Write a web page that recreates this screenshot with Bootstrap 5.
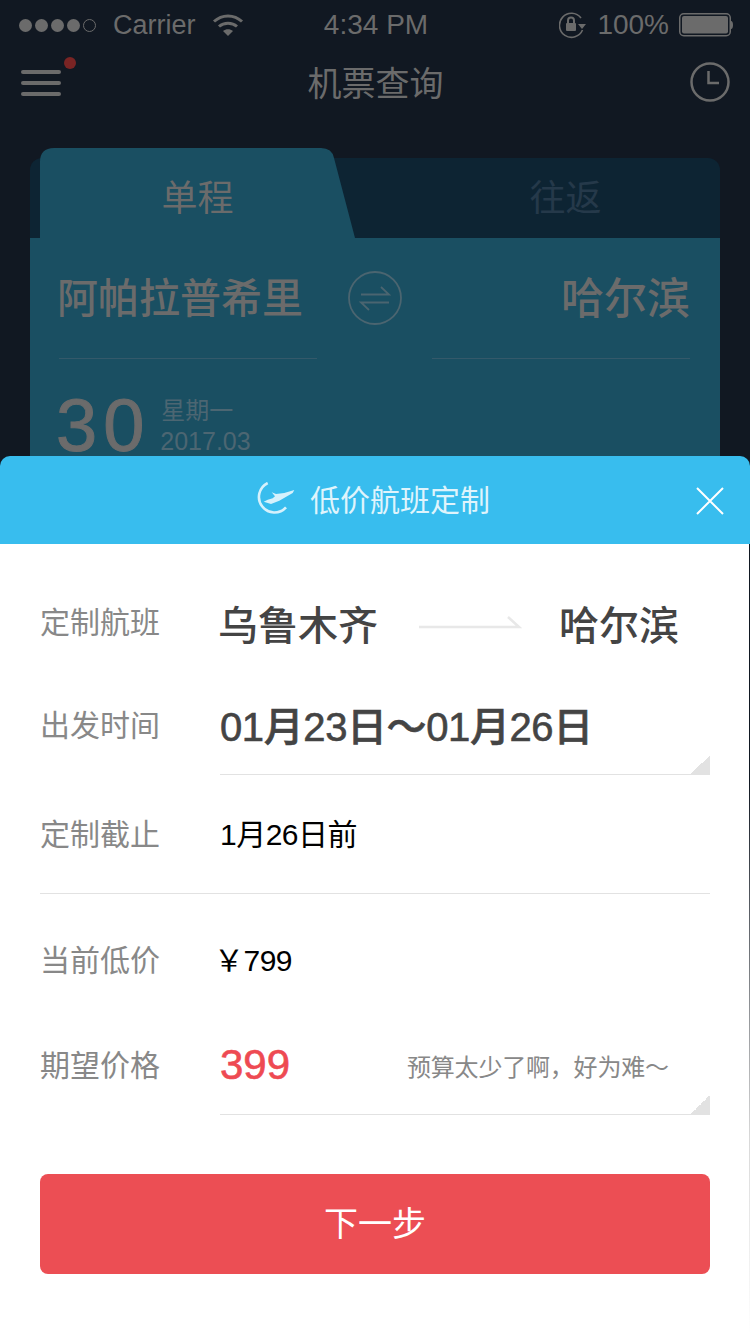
<!DOCTYPE html>
<html lang="zh-CN">
<head>
  <meta charset="UTF-8">
  <title>机票查询</title>
  <meta name="viewport" content="width=device-width, initial-scale=1">
  <link href="https://cdn.jsdelivr.net/npm/bootstrap@5.3.0/dist/css/bootstrap.min.css" rel="stylesheet">
  <script src="https://cdn.jsdelivr.net/npm/bootstrap@5.3.0/dist/js/bootstrap.bundle.min.js"></script>
  <style>
    :root {
      --dim-text: #6b6b6b;
      --dark-bg:  #111822;
      --teal:     #1a4f62;
      --line:     #e2e2e2;
    }
    body {
      width: 750px;
      height: 1334px;
      overflow: hidden;
      background: var(--dark-bg);
      font-family: "Liberation Sans", "Noto Sans CJK SC", sans-serif;
    }
    .scrim { height: 480px; overflow: hidden; color: var(--dim-text); }

    /* status bar */
    .status-bar { height: 50px; padding: 0 17px 0 19px; font-size: 27px; line-height: 50px; }
    .status-side { flex: 1 1 0; }
    .status-time { font-size: 28px; }
    .status-carrier { margin-left: 14px; }
    .status-pct { font-size: 28px; margin: 0 10px; }
    .signal-dot { width: 13px; height: 13px; border-radius: 50%; background: var(--dim-text); margin-right: 3px; }
    .signal-dot.hollow { background: none; border: 1px solid var(--dim-text); }

    /* nav */
    .top-nav { height: 68px; padding: 0 20px 0 21px; }
    .top-side { flex: 1 1 0; }
    .top-title { font-size: 34px; line-height: 68px; }
    .clock-icon { margin-bottom: 4px; }

    /* search card, the sheet lies over its lower part */
    .trip-card { margin: 40px 30px 0; height: 324px; background: #0d2433; border-radius: 12px 12px 0 0; }
    .tab-row { height: 80px; }
    .tab-on { width: 315px; height: 90px; margin: -10px 0 0 10px; font-size: 36px; line-height: 102px; }
    .tab-shape { left: 0; top: 0; }
    .tab-off { font-size: 36px; line-height: 82px; color: #25394a; padding-left: 56px; }
    .trip-body { background: var(--teal); height: 244px; padding: 0 30px 0 29px; }
    .city-row { height: 121px; }
    .city-name { font-size: 41px; font-weight: 500; line-height: 122px; width: 258px; border-bottom: 1px solid #34596a; text-indent: -2px; }
    .city-name.to-city { font-size: 43px; text-indent: 0; }
    .swap-ring { margin-top: 33px; }
    .date-row { padding-top: 37px; }
    .date-num { font-size: 74px; line-height: 60px; letter-spacing: 6px; margin-left: -3px; -webkit-text-stroke: 1px var(--dim-text); }
    .date-week { font-size: 24px; line-height: 30px; color: #4c6672; margin-left: 11px; }
    .date-ym { font-size: 25px; line-height: 30px; color: #4c6672; margin-left: 10px; }

    /* sheet */
    .sheet-head { height: 88px; margin-top: -24px; background: #38bdee; border-radius: 10px 10px 0 0; color: #dff4fc; font-size: 30px; padding-right: 5px; }
    .plane-icon { margin-right: 11px; }
    .sheet-close { right: 26px; top: 31px; line-height: 0; }
    .sheet-body {
      height: 790px;
      width: 750px;
      padding: 26px 39px 0 40px;
      background: #fff;
      border-right: 1px solid;
      border-image: linear-gradient(#111822, #111822 30%, #d8d8d8 75%, #fff) 1;
    }
    .form-line { height: 105px; }
    .form-line.ruled { height: 100px; }
    .form-line.short { height: 119px; border-bottom: 1px solid var(--line); }
    .form-line.price { height: 109px; margin-top: 12px; }
    .line-label { width: 180px; flex: none; font-size: 30px; color: #888; }
    .line-val { flex: 1 1 0; height: 100%; }
    .route-val { padding-right: 31px; }
    .ruled .line-val { border-bottom: 1px solid var(--line); }
    .corner-mark { right: 0; bottom: 0; width: 19px; height: 19px; background: linear-gradient(135deg, transparent 50%, var(--line) 50%); }
    .big-val { font-size: 40px; font-weight: 500; color: #444; margin-left: -2px; padding-top: 6px; }
    .date-val { letter-spacing: -.4px; margin-left: 0; padding-top: 4px; -webkit-text-stroke: .6px #444; }
    .plain-val { font-size: 30px; color: #000; letter-spacing: -.5px; }
    .cny-val { margin-left: -6px; }
    .want-val { font-size: 42px; color: #ee4a52; width: 187px; -webkit-text-stroke: .6px #ee4a52; }
    .want-hint { font-size: 24px; color: #888; padding-top: 6px; letter-spacing: -.2px; }
    .next-btn { height: 100px; margin-top: 59px; background: #ec4e54; border: none; border-radius: 8px; color: #fff; font-size: 34px; }
  </style>
</head>
<body>
  <div class="scrim">
    <!-- status bar -->
    <div class="status-bar d-flex align-items-center">
      <div class="status-side d-flex align-items-center">
        <span class="signal-dot"></span><span class="signal-dot"></span><span class="signal-dot"></span><span class="signal-dot"></span><span class="signal-dot hollow"></span>
        <span class="status-carrier">Carrier</span>
        <svg class="ms-3" width="32" height="24" viewBox="0 0 32 24" fill="none" stroke="#6b6b6b" stroke-width="3">
          <path d="M2 8.500C10 1 22 1 30 8.500"/>
          <path d="M7 13.500C12 9 20 9 25 13.500"/>
          <path d="M11 18L16 23L21 18C18 15.600 14 15.600 11 18Z" fill="#6b6b6b" stroke="none"/>
        </svg>
      </div>
      <div class="status-time">4:34 PM</div>
      <div class="status-side d-flex align-items-center justify-content-end">
        <svg width="28" height="28" viewBox="0 0 28 28" fill="none" stroke="#6b6b6b" stroke-width="1.600">
          <path d="M23.500 19A12 12 0 1 1 22 7"/>
          <path d="M19 13h8l-4 5z" fill="#6b6b6b" stroke="none"/>
          <rect x="7" y="12" width="10" height="8" rx="1" fill="#6b6b6b" stroke="none"/>
          <path d="M9 12V9.500a3 3 0 0 1 6 0V12" stroke-width="2"/>
        </svg>
        <span class="status-pct">100%</span>
        <svg width="54" height="24" viewBox="0 0 54 24" fill="none">
          <rect x=".75" y=".75" width="50.500" height="22" rx="4" stroke="#6b6b6b" stroke-width="1.500"/>
          <rect x="3" y="3" width="46" height="17.500" rx="2" fill="#6b6b6b"/>
          <path d="M52 8c1.500 0 2 2 2 4s-.5 4-2 4z" fill="#6b6b6b"/>
        </svg>
      </div>
    </div>

    <!-- nav -->
    <div class="top-nav d-flex align-items-center">
      <div class="top-side d-flex">
        <svg width="56" height="60" viewBox="0 0 56 60">
          <g fill="#6b6b6b">
            <rect x="0" y="16" width="40" height="4" rx="2"/>
            <rect x="0" y="27" width="40" height="4" rx="2"/>
            <rect x="0" y="38" width="40" height="4" rx="2"/>
          </g>
          <circle cx="49" cy="9" r="6" fill="#7a2424"/>
        </svg>
      </div>
      <div class="top-title">机票查询</div>
      <div class="top-side d-flex justify-content-end">
        <svg class="clock-icon" width="40" height="40" viewBox="0 0 40 40" fill="none" stroke="#6b6b6b">
          <circle cx="20" cy="20" r="18.500" stroke-width="2.500"/>
          <path d="M18.500 9V21H29" stroke-width="2.500"/>
        </svg>
      </div>
    </div>

    <!-- search card -->
    <div class="trip-card">
      <div class="tab-row d-flex">
        <div class="tab-on position-relative text-center">
          <svg class="tab-shape position-absolute" width="315" height="90" viewBox="0 0 315 90">
            <path d="M0 90V14Q0 0 14 0H281Q292 0 294 10L315 90Z" fill="#1a4f62"/>
          </svg>
          <span class="position-relative">单程</span>
        </div>
        <div class="tab-off flex-grow-1 text-center">往返</div>
      </div>
      <div class="trip-body">
        <div class="city-row d-flex justify-content-between">
          <div class="city-name">阿帕拉普希里</div>
          <svg class="swap-ring" width="54" height="54" viewBox="0 0 54 54" fill="none" stroke="#4b6570" stroke-width="1.800">
            <circle cx="27" cy="27" r="26"/>
            <path d="M13 23.500H41L33 16"/>
            <path d="M41 31.500H13L21 39"/>
          </svg>
          <div class="city-name to-city text-end">哈尔滨</div>
        </div>
        <div class="date-row d-flex align-items-center">
          <div class="date-num">30</div>
          <div>
            <div class="date-week">星期一</div>
            <div class="date-ym">2017.03</div>
          </div>
        </div>
      </div>
    </div>
  </div>

  <!-- bottom sheet -->
  <div class="sheet-head position-relative d-flex align-items-center justify-content-center">
    <svg class="plane-icon" width="44" height="36" viewBox="0 0 44 36" fill="none">
      <path d="M12.700 1A15.500 15.500 0 1 0 31 25.300" stroke="#d5f1fc" stroke-width="2.600"/>
      <path d="M16.700 10.300L21 12L29.300 11L39.300 8L37.700 11L24.300 18.700L16 22L8.700 19.700L12.700 17.700L17.700 16.300L20 14.300Z" fill="#d5f1fc"/>
    </svg>
    <span>低价航班定制</span>
    <div class="sheet-close position-absolute">
      <svg width="28" height="28" viewBox="0 0 28 28" stroke="#fff" stroke-width="2"><path d="M1 1L27 27M27 1L1 27"/></svg>
    </div>
  </div>

  <div class="sheet-body">
    <div class="form-line d-flex align-items-center">
      <div class="line-label">定制航班</div>
      <div class="line-val route-val d-flex align-items-center justify-content-between">
        <span class="big-val">乌鲁木齐</span>
        <svg width="104" height="16" viewBox="0 0 104 16" fill="none" stroke="#e8e8e8" stroke-width="2.500"><path d="M1 12H101L90 2"/></svg>
        <span class="big-val">哈尔滨</span>
      </div>
    </div>
    <div class="form-line ruled d-flex align-items-center">
      <div class="line-label">出发时间</div>
      <div class="line-val position-relative d-flex align-items-center">
        <span class="big-val date-val">01月23日～01月26日</span>
        <span class="corner-mark position-absolute"></span>
      </div>
    </div>
    <div class="form-line short d-flex align-items-center">
      <div class="line-label">定制截止</div>
      <div class="plain-val">1月26日前</div>
    </div>
    <div class="form-line price d-flex align-items-center">
      <div class="line-label">当前低价</div>
      <div class="plain-val cny-val">￥799</div>
    </div>
    <div class="form-line ruled d-flex align-items-center">
      <div class="line-label">期望价格</div>
      <div class="line-val position-relative d-flex align-items-center">
        <span class="want-val">399</span>
        <span class="want-hint">预算太少了啊，好为难～</span>
        <span class="corner-mark position-absolute"></span>
      </div>
    </div>
    <button class="next-btn btn w-100 d-block" type="button">下一步</button>
  </div>
</body>
</html>
